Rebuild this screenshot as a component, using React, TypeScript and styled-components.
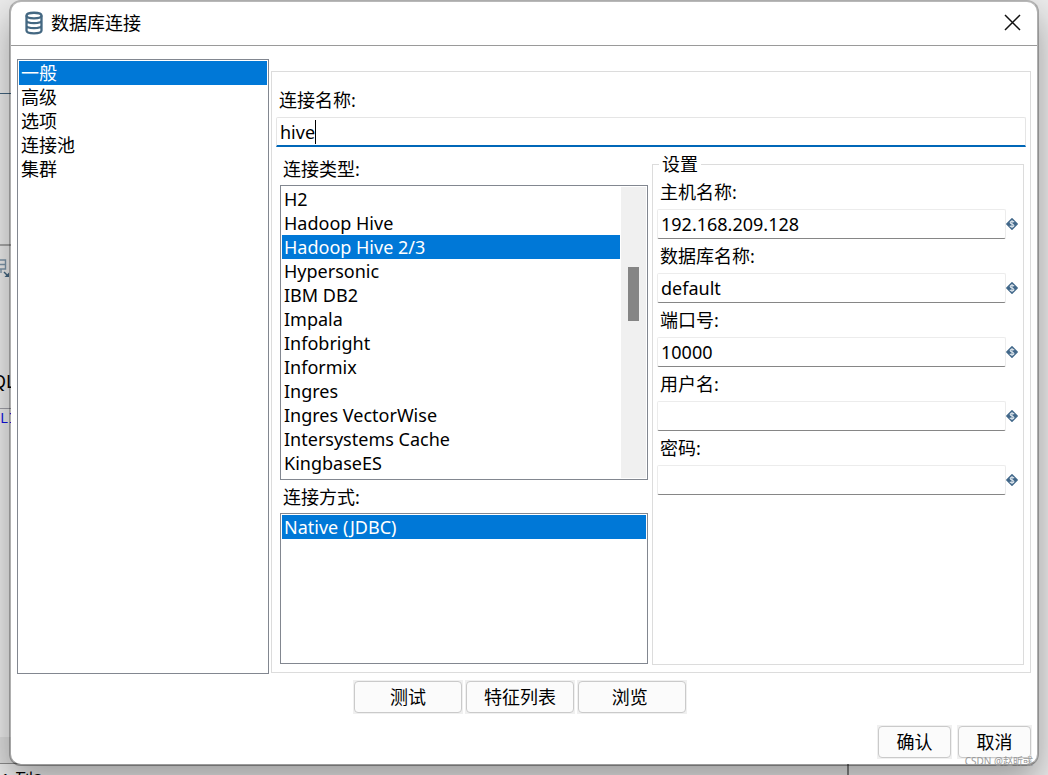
import React, { useState } from "react";
import styled, { createGlobalStyle } from "styled-components";

const GlobalStyle = createGlobalStyle`
  * { box-sizing: border-box; }
  body {
    margin: 0;
    background: #ececec;
    color: #000;
    font-family: "Noto Sans", "Noto Sans CJK SC", sans-serif;
    font-size: 18px;
    line-height: 24px;
  }
  button, input { font: inherit; color: inherit; }
`;

const Desktop = styled.div`
  display: grid;
  min-height: 100vh;
  overflow: hidden;
  > * { grid-area: 1 / 1; }
`;

const Workbench = styled.div`
  display: flex;
  flex-direction: column;
  width: 81%;
  height: 100vh;
  min-width: 0;
  overflow: hidden;
`;

const WorkbenchPane = styled.div<{ $height: number; $line?: string; $shaded?: boolean }>`
  flex: none;
  height: ${(p) => p.$height}px;
  border-bottom: ${(p) => p.$line ?? "0"};
  background: ${(p) => (p.$shaded ? "#dedede" : "transparent")};
  white-space: nowrap;
`;

const PaneTool = styled.div`
  padding-top: 12px;
  line-height: 0;
`;

const PaneCaption = styled.div`
  padding-top: 89px;
  text-indent: -8px;
`;

const PaneCode = styled.code`
  display: block;
  color: #1010e0;
  font-family: "Liberation Mono", monospace;
  font-size: 14px;
  line-height: 20px;
`;

const StatusBar = styled.div`
  flex: 1;
  padding-top: 4px;
  border-right: 2px solid #858585;
  white-space: nowrap;
`;

const Dialog = styled.section`
  position: relative;
  display: flex;
  flex-direction: column;
  margin: 0 9px 9px;
  background: #fff;
  background-clip: padding-box;
  border: 2px solid;
  border-color: rgba(0, 0, 0, 0.22) rgba(0, 0, 0, 0.26) rgba(0, 0, 0, 0.34);
  border-radius: 12px;
  box-shadow: 0 16px 36px rgba(0, 0, 0, 0.34);
`;

const TitleBar = styled.header`
  display: flex;
  align-items: center;
  height: 44px;
  padding: 0 16px 2px 14px;
  border-bottom: 1px solid #9a9a9a;
`;

const Title = styled.h1`
  flex: 1;
  margin: 0 0 0 8px;
  font-size: 18px;
  font-weight: 400;
`;

const CloseButton = styled.button`
  display: flex;
  padding: 0;
  border: 0;
  background: none;
`;

const Body = styled.div`
  flex: 1;
  display: flex;
  gap: 2px;
  padding: 13px 6px 0;
`;

const ListFrame = styled.div<{ $height?: number }>`
  display: flex;
  gap: 1px;
  ${(p) => (p.$height ? `height: ${p.$height}px;` : "flex: 1;")}
  padding: 1px;
  background: #fff;
  border: 1px solid #828790;
`;

const List = styled.ul`
  flex: 1;
  margin: 0;
  padding: 0;
  list-style: none;
`;

const Item = styled.li<{ $selected: boolean }>`
  height: 24px;
  padding-left: 2px;
  color: ${(p) => (p.$selected ? "#fff" : "#000")};
  background: ${(p) => (p.$selected ? "#0078d7" : "transparent")};
  white-space: nowrap;
  cursor: default;
`;

const ScrollTrack = styled.div`
  width: 25px;
  padding: 80px 7px 0;
  background: #f0f0f0;
`;

const ScrollThumb = styled.div`
  height: 54px;
  background: #858585;
`;

const Sidebar = styled.nav`
  display: flex;
  flex: none;
  width: 252px;
`;

const Panel = styled.main`
  flex: 1;
  min-width: 0;
  margin: 12px 0 1px;
  padding: 16px 4px 6px;
  border: 1px solid #dcdcdc;
`;

const NameLabel = styled.label`
  display: block;
  padding-left: 3px;
`;

const NameField = styled.div`
  display: flex;
  align-items: center;
  height: 30px;
  margin-top: 5px;
  padding: 0 3px;
  border: 1px solid #e5e5e5;
  border-bottom: 2px solid #0067b8;
  border-radius: 2px 2px 0 0;
`;

const NameInput = styled.input`
  field-sizing: content;
  min-width: 1px;
  padding: 0;
  border: 0;
  outline: 0;
  background: none;
  caret-color: transparent;
`;

const Caret = styled.span`
  width: 1px;
  height: 24px;
  background: #000;
`;

const Columns = styled.div`
  display: grid;
  grid-template-columns: 368fr 372fr;
  gap: 4px;
  padding: 5px 2px 0 4px;
`;

const Column = styled.div`
  min-width: 0;
  display: flex;
  flex-direction: column;
`;

const ListLabel = styled.div`
  padding: 5px 3px 4px;
`;

const Settings = styled.fieldset`
  min-width: 0;
  display: flex;
  flex-direction: column;
  margin: 0 0 -1px;
  padding: 4px 5px 0 4px;
  border: 1px solid #dcdcdc;
`;

const Legend = styled.legend`
  height: 24px;
  margin-left: 2px;
  padding: 0 3px;
`;

const Field = styled.div`
  display: grid;
  grid-template-columns: 1fr 12px;
  grid-template-rows: 29px 30px;
  align-items: center;
  height: 64px;
`;

const FieldLabel = styled.label`
  grid-column: 1 / 3;
  align-self: start;
  padding-left: 3px;
`;

const TextInput = styled.input`
  width: 100%;
  height: 30px;
  padding: 0 3px;
  background: #fff;
  border: 1px solid #ececec;
  border-bottom-color: #868686;
  border-radius: 2px;
  outline: 0;
`;

const Actions = styled.div<{ $end?: boolean }>`
  display: flex;
  justify-content: ${(p) => (p.$end ? "flex-end" : "center")};
  gap: ${(p) => (p.$end ? 5 : 2)}px;
  padding: ${(p) => (p.$end ? "11px 5px 5px" : "6px 8px 0 0")};
`;

const Button = styled.button<{ $wide?: boolean }>`
  width: ${(p) => (p.$wide ? 110 : 75)}px;
  height: 34px;
  padding: 1px;
  border: 0;
  background: #f0f0f0;
`;

const ButtonFace = styled.span`
  display: flex;
  align-items: center;
  justify-content: center;
  height: 32px;
  background: #fbfbfb;
  border: 1px solid #cacaca;
  border-radius: 4px;
  white-space: pre;
`;

const Watermark = styled.span`
  position: absolute;
  right: 4px;
  bottom: -4px;
  color: #9a9a9a;
  font-size: 10px;
  line-height: 14px;
`;

function DatabaseIcon() {
  return (
    <svg width="18" height="24" viewBox="0 0 18 24" fill="none" stroke="#446882" strokeWidth="2.3">
      <path d="M1.500 4.500C1.500 .800 16.500 .800 16.500 4.500S1.500 8.200 1.500 4.500z" />
      <path d="M1.500 4.500v15c0 3.700 15 3.700 15 0v-15M1.500 9.500c0 3.500 15 3.500 15 0M1.500 14.500c0 3.500 15 3.500 15 0" />
    </svg>
  );
}

function CloseIcon() {
  return (
    <svg width="17" height="17" viewBox="0 0 17 17" stroke="#111" strokeWidth="1.5">
      <path d="M1 1l15 15M16 1L1 16" />
    </svg>
  );
}

function VariableIcon() {
  return (
    <svg width="12" height="12" viewBox="0 0 12 12">
      <path
        d="M6 .8L11.200 6 6 11.200.8 6z"
        fill="#42688a"
        stroke="#42688a"
        strokeLinejoin="round"
        strokeWidth="1.4"
      />
      <path
        d="M8 4.200C7.500 2.900 4.200 2.900 4.200 4.600c0 1.700 3.700 1.100 3.700 2.900 0 1.700-3.500 1.600-4 .2M6 2v8"
        fill="none"
        stroke="#d5dfe7"
        strokeWidth="1.200"
      />
    </svg>
  );
}

function TransformIcon() {
  return (
    <svg width="10" height="22" viewBox="0 0 10 22" fill="none" stroke="#7d95a8" strokeWidth="1.4">
      <path d="M0 2h5.500v9H0M0 6.500h5.500M1 11v4" />
      <path d="M4 14l4 4" stroke="#42647f" />
      <path d="M9 14.500V19H4.500z" fill="#42647f" stroke="none" />
    </svg>
  );
}

interface ListBoxProps {
  label: string;
  items: string[];
  initial: string;
  height?: number;
  scroll?: boolean;
}

function ListBox({ label, items, initial, height, scroll }: ListBoxProps) {
  const [selected, setSelected] = useState(initial);
  return (
    <ListFrame $height={height}>
      <List role="listbox" aria-label={label} tabIndex={0}>
        {items.map((item) => (
          <Item
            key={item}
            role="option"
            aria-selected={item === selected}
            $selected={item === selected}
            onClick={() => setSelected(item)}
          >
            {item}
          </Item>
        ))}
      </List>
      {scroll && (
        <ScrollTrack>
          <ScrollThumb />
        </ScrollTrack>
      )}
    </ListFrame>
  );
}

const categories = ["一般", "高级", "选项", "连接池", "集群"];

const databaseTypes = [
  "H2",
  "Hadoop Hive",
  "Hadoop Hive 2/3",
  "Hypersonic",
  "IBM DB2",
  "Impala",
  "Infobright",
  "Informix",
  "Ingres",
  "Ingres VectorWise",
  "Intersystems Cache",
  "KingbaseES",
];

const fields = [
  { id: "host", label: "主机名称:", value: "192.168.209.128" },
  { id: "database", label: "数据库名称:", value: "default" },
  { id: "port", label: "端口号:", value: "10000" },
  { id: "user", label: "用户名:", value: "" },
  { id: "password", label: "密码:", value: "", type: "password" },
];

export default function App() {
  return (
    <>
      <GlobalStyle />
      <Desktop>
        <Workbench aria-hidden="true">
          <WorkbenchPane $height={94} $line="1px solid #42647f" />
          <WorkbenchPane $height={152} $line="2px solid #a8a8a8" />
          <WorkbenchPane $height={163} $line="1px solid #a0a0a8">
            <PaneTool>
              <TransformIcon />
            </PaneTool>
            <PaneCaption>QL</PaneCaption>
          </WorkbenchPane>
          <WorkbenchPane $height={328}>
            <PaneCode>LI</PaneCode>
          </WorkbenchPane>
          <WorkbenchPane $height={27} $line="1px solid #8c8c8c" $shaded />
          <StatusBar>1 列2</StatusBar>
        </Workbench>

        <Dialog role="dialog" aria-labelledby="dialog-title">
          <TitleBar>
            <DatabaseIcon />
            <Title id="dialog-title">数据库连接</Title>
            <CloseButton type="button" aria-label="关闭">
              <CloseIcon />
            </CloseButton>
          </TitleBar>

          <Body>
            <Sidebar>
              <ListBox label="类别" items={categories} initial="一般" />
            </Sidebar>
            <Panel>
              <NameLabel htmlFor="name">连接名称:</NameLabel>
              <NameField>
                <NameInput id="name" defaultValue="hive" />
                <Caret />
              </NameField>
              <Columns>
                <Column>
                  <ListLabel>连接类型:</ListLabel>
                  <ListBox label="连接类型" items={databaseTypes} initial="Hadoop Hive 2/3" height={295} scroll />
                  <ListLabel>连接方式:</ListLabel>
                  <ListBox label="连接方式" items={["Native (JDBC)"]} initial="Native (JDBC)" height={151} />
                </Column>
                <Settings>
                  <Legend>设置</Legend>
                  {fields.map((field) => (
                    <Field key={field.id}>
                      <FieldLabel htmlFor={field.id}>{field.label}</FieldLabel>
                      <TextInput id={field.id} type={field.type ?? "text"} defaultValue={field.value} />
                      <VariableIcon />
                    </Field>
                  ))}
                </Settings>
              </Columns>
            </Panel>
          </Body>

          <Actions>
            <Button type="button" $wide>
              <ButtonFace>测试</ButtonFace>
            </Button>
            <Button type="button" $wide>
              <ButtonFace>特征列表</ButtonFace>
            </Button>
            <Button type="button" $wide>
              <ButtonFace>{"浏览 "}</ButtonFace>
            </Button>
          </Actions>
          <Actions $end>
            <Button type="button">
              <ButtonFace>确认</ButtonFace>
            </Button>
            <Button type="button">
              <ButtonFace>取消</ButtonFace>
            </Button>
          </Actions>
          <Watermark>CSDN @赵昕彧</Watermark>
        </Dialog>
      </Desktop>
    </>
  );
}
